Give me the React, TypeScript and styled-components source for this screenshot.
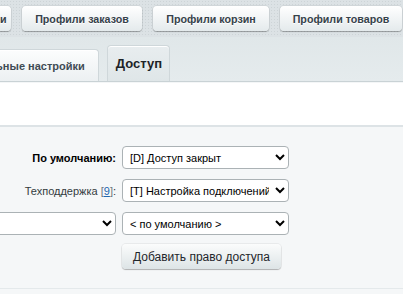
import { createGlobalStyle, styled } from "styled-components";

const Global = createGlobalStyle`
  html, body {
    margin: 0;
    padding: 0;
    background: #f5f7f8;
  }
  body {
    width: 403px;
    height: 294px;
    overflow: hidden;
    font-family: "Liberation Sans", Arial, sans-serif;
    font-size: 11px;
  }
`;

const Page = styled.div`
  width: 403px;
  height: 294px;
  overflow: hidden;
  display: flex;
  flex-direction: column;
`;

const Toolbar = styled.div`
  height: 37px;
  flex: none;
  display: flex;
  align-items: flex-start;
  gap: 11px;
  padding-top: 6px;
  box-sizing: border-box;
  margin-left: -48px;
  background-color: #dce2e5;
  background-image: radial-gradient(#cdd4d7 0.6px, transparent 0.8px);
  background-size: 3px 3px;
`;

const ToolButton = styled.div<{ $w: number }>`
  width: ${(p) => p.$w}px;
  flex: none;
  height: 25px;
  box-sizing: border-box;
  border-radius: 4px;
  background: linear-gradient(#ffffff, #e4eaec);
  box-shadow: 0 1px 1px rgba(0, 0, 0, 0.28), 0 0 0 1px rgba(0, 0, 0, 0.05);
  color: #36424a;
  font-weight: bold;
  font-size: 10.7px;
  display: flex;
  align-items: center;
  justify-content: center;
  white-space: nowrap;
  text-shadow: 0 1px #fff;
`;

const TabBar = styled.div`
  height: 45px;
  flex: none;
  box-sizing: border-box;
  display: flex;
  justify-content: flex-end;
  align-items: flex-end;
  gap: 8px;
  padding-right: 233px;
  background: linear-gradient(#e0e7e9, #e5ebed);
  border-bottom: 1px solid #c9d2d5;
`;

const Tab = styled.div<{ $active?: boolean }>`
  flex: none;
  height: ${(p) => (p.$active ? 36 : 32)}px;
  box-sizing: border-box;
  padding: ${(p) => (p.$active ? "0 7px 0 8px" : "0 13px")};
  border: 1px solid #cfd7da;
  border-bottom: none;
  border-radius: 4px 4px 0 0;
  box-shadow: inset 0 1px 0 #fff;
  background: ${(p) =>
    p.$active
      ? "linear-gradient(#e8edef, #dfe6e8)"
      : "linear-gradient(#fcfdfd, #ecf0f2)"};
  color: ${(p) => (p.$active ? "#1d2327" : "#3f4b54")};
  font-weight: bold;
  font-size: ${(p) => (p.$active ? 13 : 11)}px;
  display: flex;
  align-items: center;
  white-space: nowrap;
`;

const Header = styled.div`
  height: 42px;
  flex: none;
  background: #fff;
  border-top: 1px solid #f4f6f7;
  border-bottom: 2px solid #dde3e6;
`;

const Body = styled.div`
  flex: 1;
  background: #f5f7f8;
  padding-top: 19px;
  margin-left: -40px;
`;

const Grid = styled.div`
  display: grid;
  grid-template-columns: 156px 167px;
  column-gap: 6px;
  row-gap: 10px;
  align-items: center;
`;

const Label = styled.div<{ $bold?: boolean }>`
  text-align: right;
  font-weight: ${(p) => (p.$bold ? "bold" : "normal")};
  color: ${(p) => (p.$bold ? "#000" : "#333b40")};
  font-size: 11px;
  white-space: nowrap;
`;

const Gray = styled.span`
  color: #6b7780;
`;

const Link = styled.a`
  color: #2067b0;
  text-decoration: underline;
`;

const Select = styled.select`
  width: 100%;
  height: 23px;
  box-sizing: border-box;
  border: 1px solid #abb2b5;
  border-radius: 4px;
  background: #fff;
  font-family: "Liberation Sans", Arial, sans-serif;
  font-size: 11px;
  color: #000;
  padding: 0 3px;
  margin: 0;
`;

const AddButton = styled.div`
  width: 159px;
  height: 25px;
  margin-top: -1px;
  box-sizing: border-box;
  border-radius: 4px;
  background: linear-gradient(#fbfcfc, #dde4e6);
  box-shadow: 0 1px 1px rgba(0, 0, 0, 0.25), 0 0 0 1px rgba(0, 0, 0, 0.05);
  color: #1f262b;
  font-size: 12px;
  display: flex;
  align-items: center;
  justify-content: center;
  white-space: nowrap;
`;

const Footer = styled.div`
  height: 5px;
  flex: none;
  border-top: 1px solid #e4e9eb;
  background: #f5f7f8;
`;

export default function App() {
  return (
    <Page>
      <Global />
      <Toolbar>
        <ToolButton $w={59}>Профили</ToolButton>
        <ToolButton $w={120}>Профили заказов</ToolButton>
        <ToolButton $w={116}>Профили корзин</ToolButton>
        <ToolButton $w={122}>Профили товаров</ToolButton>
      </Toolbar>
      <TabBar>
        <Tab>Дополнительные настройки</Tab>
        <Tab $active>Доступ</Tab>
      </TabBar>
      <Header />
      <Body>
        <Grid>
          <Label $bold>По умолчанию:</Label>
          <Select defaultValue="D">
            <option value="D">[D] Доступ закрыт</option>
          </Select>
          <Label>
            Техподдержка <Gray>[</Gray>
            <Link>9</Link>
            <Gray>]</Gray>:
          </Label>
          <Select defaultValue="T">
            <option value="T">[T] Настройка подключений</option>
          </Select>
          <Select defaultValue="">
            <option value=""></option>
          </Select>
          <Select defaultValue="def">
            <option value="def">&lt; по умолчанию &gt;</option>
          </Select>
          <div />
          <AddButton>Добавить право доступа</AddButton>
        </Grid>
      </Body>
      <Footer />
    </Page>
  );
}
